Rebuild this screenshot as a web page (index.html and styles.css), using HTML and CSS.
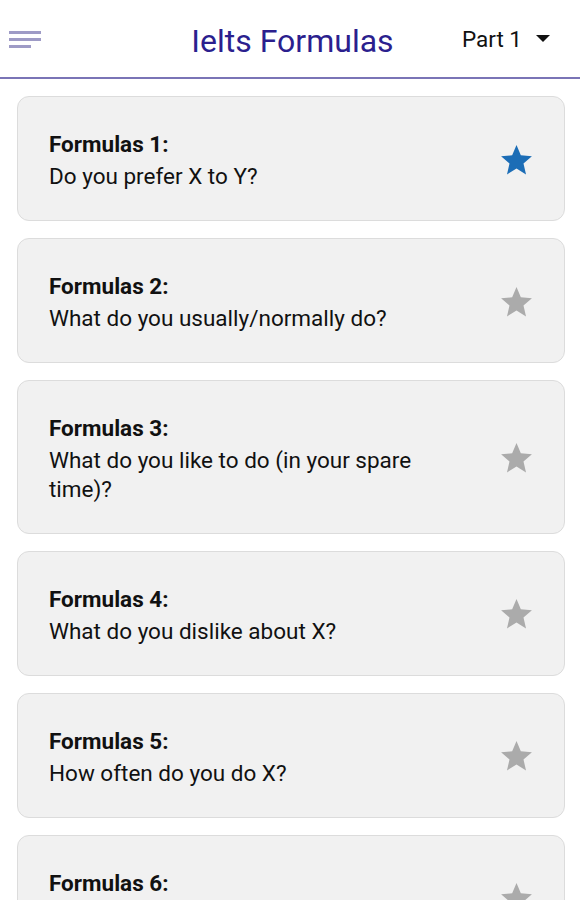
FILE: index.html
```html
<!DOCTYPE html>
<html>
<head>
<meta charset="utf-8">
<link rel="stylesheet" href="styles.css">
</head>
<body>
<header class="topbar">
  <div class="menu">
    <span class="bar"></span>
    <span class="bar"></span>
    <span class="bar short"></span>
  </div>
  <h1 class="title">Ielts Formulas</h1>
  <div class="part">Part 1 <span class="caret"></span></div>
</header>
<main class="list">
  <div class="card">
    <div class="text"><div class="name">Formulas 1:</div><div class="desc">Do you prefer X to Y?</div></div>
    <svg class="star active" viewBox="0 0 24 24"><path d="M12 17.27L18.18 21l-1.64-7.03L22 9.24l-7.19-.61L12 2 9.19 8.63 2 9.24l5.46 4.73L5.82 21z"/></svg>
  </div>
  <div class="card">
    <div class="text"><div class="name">Formulas 2:</div><div class="desc">What do you usually/normally do?</div></div>
    <svg class="star" viewBox="0 0 24 24"><path d="M12 17.27L18.18 21l-1.64-7.03L22 9.24l-7.19-.61L12 2 9.19 8.63 2 9.24l5.46 4.73L5.82 21z"/></svg>
  </div>
  <div class="card">
    <div class="text"><div class="name">Formulas 3:</div><div class="desc">What do you like to do (in your spare time)?</div></div>
    <svg class="star" viewBox="0 0 24 24"><path d="M12 17.27L18.18 21l-1.64-7.03L22 9.24l-7.19-.61L12 2 9.19 8.63 2 9.24l5.46 4.73L5.82 21z"/></svg>
  </div>
  <div class="card">
    <div class="text"><div class="name">Formulas 4:</div><div class="desc">What do you dislike about X?</div></div>
    <svg class="star" viewBox="0 0 24 24"><path d="M12 17.27L18.18 21l-1.64-7.03L22 9.24l-7.19-.61L12 2 9.19 8.63 2 9.24l5.46 4.73L5.82 21z"/></svg>
  </div>
  <div class="card">
    <div class="text"><div class="name">Formulas 5:</div><div class="desc">How often do you do X?</div></div>
    <svg class="star" viewBox="0 0 24 24"><path d="M12 17.27L18.18 21l-1.64-7.03L22 9.24l-7.19-.61L12 2 9.19 8.63 2 9.24l5.46 4.73L5.82 21z"/></svg>
  </div>
  <div class="card">
    <div class="text"><div class="name">Formulas 6:</div><div class="desc">What kind of X do you like?</div></div>
    <svg class="star" viewBox="0 0 24 24"><path d="M12 17.27L18.18 21l-1.64-7.03L22 9.24l-7.19-.61L12 2 9.19 8.63 2 9.24l5.46 4.73L5.82 21z"/></svg>
  </div>
</main>
</body>
</html>
```
FILE: styles.css
```css
html, body {
  margin: 0;
  padding: 0;
  background: #ffffff;
  font-family: Roboto, "Liberation Sans", sans-serif;
}
body {
  height: 900px;
  overflow: hidden;
}
.topbar {
  height: 77px;
  border-bottom: 2px solid #7a74b6;
  display: flex;
  align-items: center;
  padding: 0 0 0 9px;
}
.menu {
  display: flex;
  flex-direction: column;
  gap: 4.5px;
  width: 32px;
  margin-top: 2px;
}
.bar {
  display: block;
  height: 2.5px;
  width: 32px;
  background: #9e9bc6;
}
.bar.short {
  width: 22px;
}
.title {
  flex: 1;
  margin: 4px 0 0 0;
  text-align: center;
  font-weight: 400;
  font-size: 32px;
  color: #2b1f8e;
  padding-left: 82px;
}
.part {
  font-size: 22.5px;
  color: #111;
  display: flex;
  align-items: center;
  gap: 14px;
  margin-right: 30px;
}
.caret {
  width: 0;
  height: 0;
  border-left: 7px solid transparent;
  border-right: 7px solid transparent;
  border-top: 7px solid #111;
}
.list {
  display: flex;
  flex-direction: column;
  gap: 17px;
  padding: 17px 15px 0 17px;
}
.card {
  background: #f1f1f1;
  border: 1px solid #dcdcdc;
  border-radius: 12px;
  display: flex;
  align-items: center;
  padding: 33px 29px 29.5px 31px;
  gap: 32px;
}
.text {
  flex: 1;
  font-size: 22.5px;
  line-height: 28.5px;
  color: #111;
}
.name {
  font-weight: 700;
  margin-bottom: 3.5px;
}
.star {
  width: 37px;
  height: 37px;
  fill: #ababab;
  flex: none;
}
.star.active {
  fill: #1c6db6;
}
```
